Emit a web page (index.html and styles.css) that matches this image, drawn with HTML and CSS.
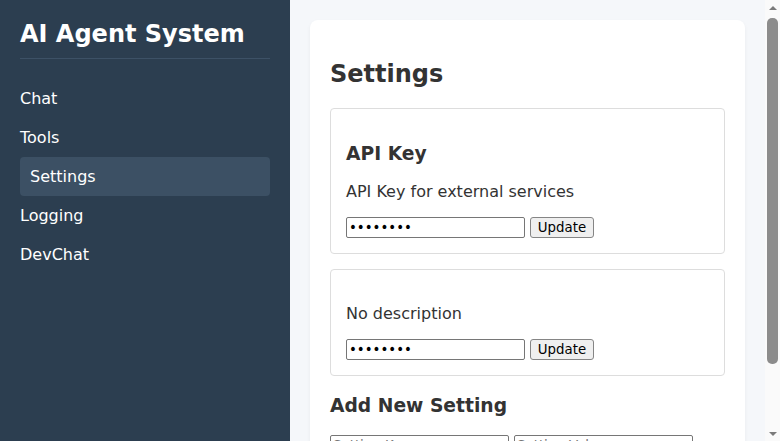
FILE: index.html
```html
<!DOCTYPE html>
<html>
<head>
<meta charset="utf-8">
<link rel="stylesheet" href="styles.css">
</head>
<body>
<div class="app">
  <aside class="sidebar">
    <h1 class="brand">AI Agent System</h1>
    <nav class="nav">
      <a class="nav-link">Chat</a>
      <a class="nav-link">Tools</a>
      <a class="nav-link active">Settings</a>
      <a class="nav-link">Logging</a>
      <a class="nav-link">DevChat</a>
    </nav>
  </aside>
  <main class="main">
    <div class="card">
      <h2 class="title">Settings</h2>
      <div class="setting">
        <h3 class="setting-name">API Key</h3>
        <p class="setting-desc">API Key for external services</p>
        <div class="row">
          <input class="field" type="password" value="secretky">
          <button class="btn">Update</button>
        </div>
      </div>
      <div class="setting">
        <h3 class="setting-name"></h3>
        <p class="setting-desc">No description</p>
        <div class="row">
          <input class="field" type="password" value="secretky">
          <button class="btn">Update</button>
        </div>
      </div>
      <h3 class="section">Add New Setting</h3>
      <div class="row">
        <input class="field" type="text" placeholder="Setting Key">
        <input class="field" type="text" placeholder="Setting Value">
      </div>
      <div class="spacer"></div>
    </div>
  </main>
  <div class="scrollbar" aria-hidden="true">
    <div class="sb-arrow up"></div>
    <div class="sb-track"><div class="sb-thumb"></div></div>
    <div class="sb-arrow down"></div>
  </div>
</div>
</body>
</html>
```
FILE: styles.css
```css
html, body {
  margin: 0;
  padding: 0;
}
body {
  font-family: "DejaVu Sans", sans-serif;
  color: #333;
  background: #f5f7fa;
}
.app {
  display: flex;
  align-items: flex-start;
  min-height: 100vh;
}
.sidebar {
  width: 250px;
  flex: 0 0 250px;
  align-self: stretch;
  padding: 20px;
  background: #2c3e50;
  color: #fff;
}
.brand {
  margin: 0 0 20px;
  padding-bottom: 10px;
  font-size: 24px;
  line-height: 28px;
  border-bottom: 1px solid #3d5166;
}
.nav {
  display: flex;
  flex-direction: column;
}
.nav-link {
  display: block;
  padding: 10px 0;
  font-size: 16px;
  line-height: 19px;
  color: #fff;
  border-radius: 4px;
}
.nav-link.active {
  background: #3c5064;
  padding-left: 10px;
}
.main {
  flex: 1;
  min-width: 0;
  padding: 20px;
}
.card {
  background: #fff;
  border-radius: 8px;
  padding: 20px;
  box-shadow: 0 2px 4px rgba(0,0,0,0.05);
}
.title {
  margin: 20px 0;
  font-size: 24px;
  line-height: normal;
}
.setting {
  border: 1px solid #ddd;
  border-radius: 4px;
  padding: 15px;
  margin-bottom: 15px;
}
.setting-name, .section {
  margin: 18.72px 0;
  font-size: 18.72px;
  line-height: normal;
}
.setting-desc {
  margin: 16px 0;
  font-size: 16px;
  line-height: normal;
}
.row {
  display: flex;
  gap: 5px;
  align-items: center;
}
.field {
  box-sizing: border-box;
  width: 179px;
  height: 21px;
  margin: 0;
  padding: 1px 2px;
  border: 1px solid #767676;
  border-radius: 2px;
  font-family: "DejaVu Sans", sans-serif;
  font-size: 13.33px;
}
.btn {
  box-sizing: border-box;
  height: 21px;
  width: 64px;
  margin: 0;
  padding: 1px 6px;
  border: 1px solid #858585;
  border-radius: 3px;
  background: #efefef;
  font-family: "DejaVu Sans", sans-serif;
  font-size: 13.33px;
  color: #000;
}
.spacer {
  height: 200px;
}
.scrollbar {
  position: sticky;
  top: 0;
  flex: 0 0 15px;
  width: 15px;
  height: 100vh;
  display: flex;
  flex-direction: column;
  background: #fafafa;
}
.sb-arrow {
  flex: 0 0 15px;
  display: flex;
  justify-content: center;
  align-items: center;
}
.sb-arrow::before {
  content: "";
  width: 0;
  height: 0;
  border-left: 4px solid transparent;
  border-right: 4px solid transparent;
}
.sb-arrow.up::before {
  border-bottom: 4px solid #7a7a7a;
}
.sb-arrow.down::before {
  border-top: 4px solid #7a7a7a;
}
.sb-track {
  flex: 1;
  padding: 3px 2px 0;
}
.sb-thumb {
  height: 346px;
  background: #8c8c8c;
  border-radius: 5px;
}
```
